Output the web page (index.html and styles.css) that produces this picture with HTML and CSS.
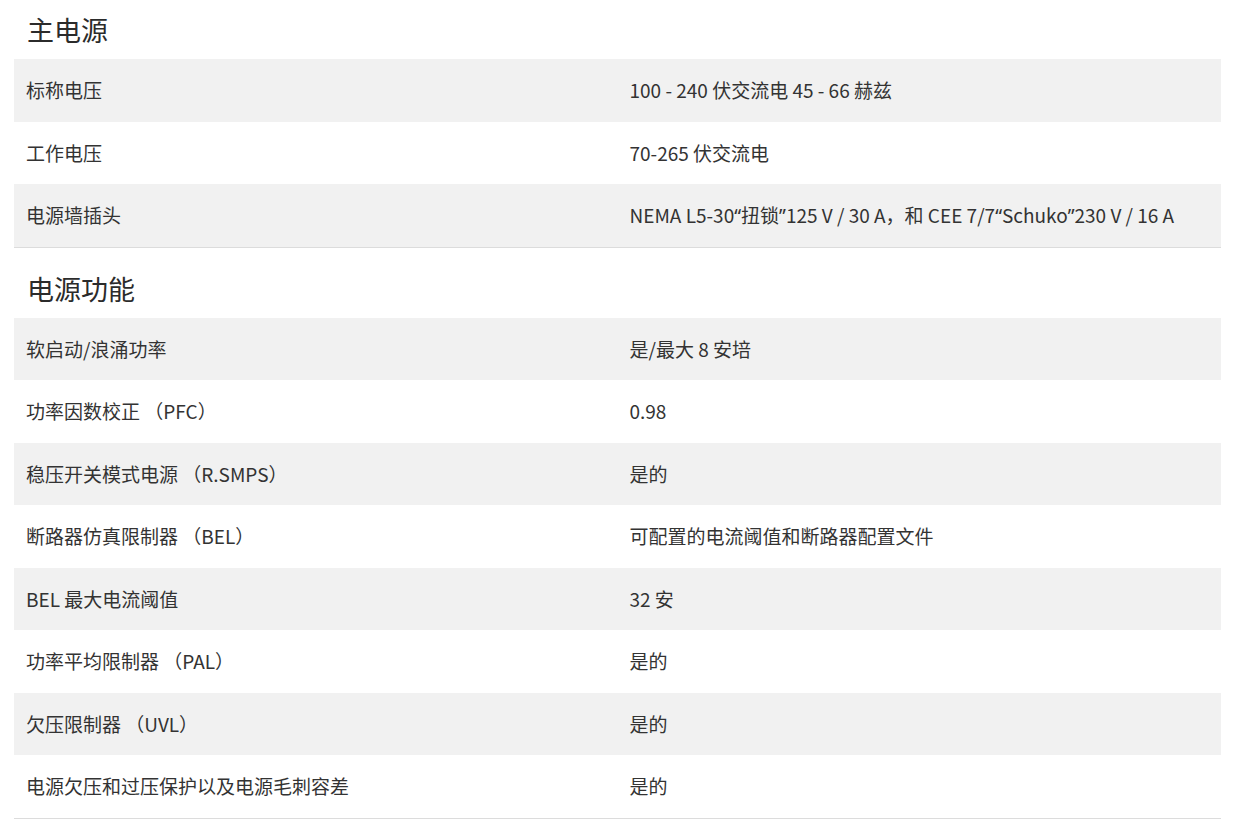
FILE: index.html
```html
<!DOCTYPE html>
<html lang="zh-CN">
<head>
<meta charset="utf-8">
<link rel="stylesheet" href="styles.css">
</head>
<body>
<div class="page">
  <section class="spec">
    <h2 class="spec-title">主电源</h2>
    <div class="spec-table">
      <div class="row"><div class="cell">标称电压</div><div class="cell">100 - 240 伏交流电 45 - 66 赫兹</div></div>
      <div class="row"><div class="cell">工作电压</div><div class="cell">70-265 伏交流电</div></div>
      <div class="row"><div class="cell">电源墙插头</div><div class="cell">NEMA L5-30<span class="q">“</span>扭锁<span class="q">”</span>125 V / 30 A，和 CEE 7/7<span class="q">“</span>Schuko<span class="q">”</span>230 V / 16 A</div></div>
    </div>
  </section>
  <section class="spec">
    <h2 class="spec-title">电源功能</h2>
    <div class="spec-table">
      <div class="row"><div class="cell">软启动/浪涌功率</div><div class="cell">是/最大 8 安培</div></div>
      <div class="row"><div class="cell">功率因数校正 （PFC）</div><div class="cell">0.98</div></div>
      <div class="row"><div class="cell">稳压开关模式电源 （R.SMPS）</div><div class="cell">是的</div></div>
      <div class="row"><div class="cell">断路器仿真限制器 （BEL）</div><div class="cell">可配置的电流阈值和断路器配置文件</div></div>
      <div class="row"><div class="cell">BEL 最大电流阈值</div><div class="cell">32 安</div></div>
      <div class="row"><div class="cell">功率平均限制器 （PAL）</div><div class="cell">是的</div></div>
      <div class="row"><div class="cell">欠压限制器 （UVL）</div><div class="cell">是的</div></div>
      <div class="row"><div class="cell">电源欠压和过压保护以及电源毛刺容差</div><div class="cell">是的</div></div>
    </div>
  </section>
</div>
</body>
</html>
```

FILE: styles.css
```css
html, body {
  margin: 0;
  padding: 0;
  background: #fff;
}
body {
  font-family: "Noto Sans CJK SC", "Noto Sans", sans-serif;
  color: #333;
}
.page {
  padding: 0 12px 0 14px;
}
.spec + .spec {
  margin-top: 11px;
}
.spec-title {
  margin: 0;
  padding: 12px 0 11px 13px;
  font-size: 27px;
  line-height: 36px;
  font-weight: 400;
  color: #2b2b2b;
}
.spec-table {
  border-bottom: 1px solid #dcdcdc;
}
.row {
  display: grid;
  grid-template-columns: 1fr 1fr;
  height: 62.5px;
  align-items: center;
}
.row:nth-child(odd) {
  background: #f1f1f1;
}
.cell {
  padding-left: 12px;
  font-size: 19px;
  line-height: 26px;
  white-space: nowrap;
}
.q {
  font-family: "Noto Sans", sans-serif;
}
```
